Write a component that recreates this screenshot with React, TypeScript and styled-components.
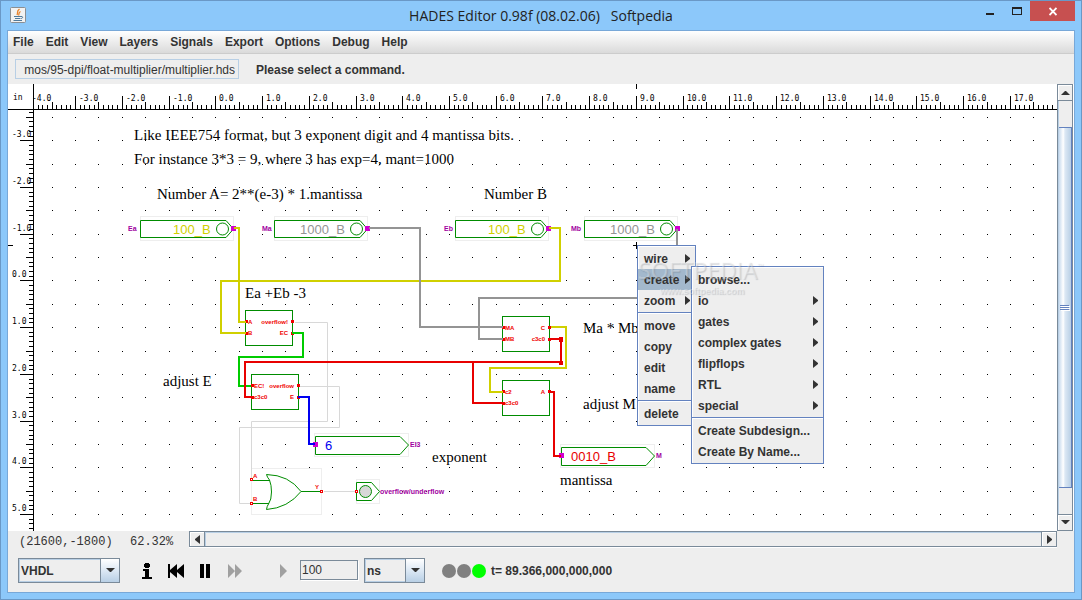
import React from "react";
import styled, { createGlobalStyle, css } from "styled-components";

const SANS = '"Liberation Sans", Arial, sans-serif';
const SERIF = '"Liberation Serif", "Times New Roman", serif';
const MONO = '"Liberation Mono", "Courier New", monospace';

const GlobalStyle = createGlobalStyle`
  * { box-sizing: border-box; }
  body { margin: 0; font: 12px/16px ${SANS}; color: #333; }
  button, input, select { font: inherit; color: inherit; margin: 0; border-radius: 0; }
`;

/* ---------- window frame ---------- */

const Frame = styled.div`
  display: flex;
  flex-direction: column;
  height: 100vh;
  min-height: 400px;
  padding: 0 6px 6px;
  border: 1px solid #6a98c6;
  background: #8cc8fa;
`;

const TitleBar = styled.header`
  display: grid;
  grid-template-columns: 104px 1fr 104px;
  align-items: start;
  height: 29px;
  flex: none;
`;

const AppIcon = styled.svg`
  width: 16px;
  height: 16px;
  margin: 6px 0 0 3px;
`;

const Title = styled.h1`
  margin: 0;
  padding-top: 5px;
  font: 14px/20px "Open Sans", sans-serif;
  color: #222;
  text-align: center;
  white-space: pre;
`;

const WindowButtons = styled.div`
  display: flex;
  justify-content: flex-end;
`;

const WindowButton = styled.button<{ $close?: boolean }>`
  width: ${(p) => (p.$close ? 45 : 27)}px;
  height: 20px;
  padding: 0;
  border: 0;
  background: ${(p) => (p.$close ? "#c75050" : "transparent")};
  svg { display: block; margin: 0 auto; }
`;

const Content = styled.div`
  display: flex;
  flex-direction: column;
  flex: 1;
  min-height: 0;
  border: 1px solid #78a8d8;
  background: #eee;
`;

/* ---------- menu bar and command line ---------- */

const MenuBar = styled.nav`
  display: flex;
  gap: 12px;
  height: 23px;
  flex: none;
  padding: 3px 5px 0;
  border-bottom: 1px solid #ccc;
  background: linear-gradient(#fff, #dadada);
`;

const MenuButton = styled.button`
  padding: 0;
  border: 0;
  background: none;
  font-weight: bold;
  line-height: 16px;
  height: 16px;
`;

const CommandBar = styled.div`
  display: flex;
  align-items: center;
  gap: 17px;
  height: 30px;
  flex: none;
  padding: 0 7px;
`;

const PathField = styled.input`
  width: 224px;
  height: 20px;
  padding: 2px 3px 0;
  border: 1px solid #b8cfe5;
  outline: 0;
  background: #eee;
  text-align: right;
`;

const Prompt = styled.strong`
  padding-top: 2px;
`;

/* ---------- work area ---------- */

const WorkArea = styled.main`
  position: relative;
  display: flex;
  flex: 1;
  min-height: 0;
  background: #fff;
`;

const Sheet = styled.svg`
  display: block;
  flex: 1;
  min-width: 0;
  height: 100%;
`;

const Note = styled.text`
  font: 15px ${SERIF};
  fill: #000;
`;

const RulerText = styled.text`
  font: 8px "DejaVu Sans Mono", monospace;
  fill: #000;
`;

const ValueText = styled.text`
  font: 13px ${SANS};
`;

const NameText = styled.text`
  font: bold 7px ${SANS};
  fill: #a000a0;
`;

const PinText = styled.text`
  font: bold 6px ${SANS};
  fill: #f00000;
`;

/* ---------- scroll bars ---------- */

const VScroll = styled.div`
  display: flex;
  flex-direction: column;
  width: 17px;
  flex: none;
  border-left: 1px solid #7a8a99;
  border-right: 1px solid #fff;
`;

const VTrack = styled.div`
  display: flex;
  flex-direction: column;
  flex: 1;
  padding: 26px 0;
  background: #eee;
  border-left: 1px solid #b8cfe5;
  border-right: 1px solid #7a8a99;
`;

const VThumb = styled.div`
  flex: 1;
  display: grid;
  place-items: center;
  border: 1px solid #6382bf;
  border-left: 0;
  background: linear-gradient(90deg, #c8dbee, #fff 35%, #dce8f4 50%, #b8cfe5);
`;

const ScrollButton = styled.button<{ $side?: boolean }>`
  display: grid;
  place-items: center;
  flex: none;
  width: 16px;
  height: ${(p) => (p.$side ? 16 : 17)}px;
  padding: 0;
  border: 1px solid #7a8a99;
  background: #eee;
  box-shadow: inset 1px 1px #fff;
  ${(p) =>
    !p.$side &&
    css`
      width: 15px;
      border-left: 0;
    `}
`;

const StatusRow = styled.div`
  display: flex;
  height: 18px;
  flex: none;
  padding-right: 17px;
`;

const Readout = styled.output`
  font: 12px/22px ${MONO};
  width: 111px;
  padding-left: 11px;
`;

const Zoom = styled(Readout)`
  width: 70px;
`;

const HScroll = styled.div`
  display: flex;
  flex: 1;
  height: 17px;
  border-bottom: 1px solid #fff;
`;

const HTrack = styled.div`
  flex: 1;
  border: 1px solid #7a8a99;
  border-width: 1px 0;
  box-shadow: inset 1px 1px #b8cfe5;
`;

/* ---------- simulation controls ---------- */

const SimBar = styled.footer`
  display: flex;
  align-items: center;
  height: 43px;
  flex: none;
  padding: 0 10px;
`;

const Combo = styled.label<{ $w: number }>`
  position: relative;
  width: ${(p) => p.$w}px;
  height: 25px;
  flex: none;
`;

const Select = styled.select`
  appearance: none;
  width: 100%;
  height: 25px;
  padding: 0 20px 0 2px;
  border: 1px solid #7a8a99;
  outline: 0;
  background: #eee;
  box-shadow: inset 1px 1px #b8cfe5, inset -1px -1px #b8cfe5;
  font-weight: bold;
`;

const ComboArrow = styled.span`
  position: absolute;
  top: 0;
  right: 0;
  display: grid;
  place-items: center;
  width: 20px;
  height: 25px;
  border: 1px solid #7a8a99;
  background: linear-gradient(#fff, #dce8f4 50%, #b8cfe5);
  pointer-events: none;
`;

const Transport = styled.div`
  display: flex;
  align-items: center;
  gap: 14px;
  margin-left: 20px;
`;

const IconButton = styled.button`
  padding: 0;
  border: 0;
  background: none;
  height: 16px;
  svg { display: block; }
`;

const StepGroup = styled.div`
  display: flex;
  align-items: center;
  gap: 6px;
  margin-left: 37px;
`;

const StepField = styled.input`
  width: 58px;
  height: 20px;
  margin: 0 0 2px 6px;
  padding: 0 1px;
  border: 1px solid #7a8a99;
  outline: 0;
  background: #eee;
  box-shadow: 1px 1px #fff;
`;

const Lamps = styled.div`
  display: flex;
  gap: 1px;
  margin: 0 5px 0 17px;
`;

const Lamp = styled.span<{ $on?: boolean }>`
  width: 14px;
  height: 14px;
  border-radius: 50%;
  background: ${(p) => (p.$on ? "#0f0" : "#808080")};
`;

/* ---------- popup menus ---------- */

const Popup = styled.ul<{ $x: number; $y: number; $w: number }>`
  position: absolute;
  left: ${(p) => p.$x}px;
  top: ${(p) => p.$y}px;
  width: ${(p) => p.$w}px;
  margin: 0;
  padding: 2px 0 1px;
  list-style: none;
  border: 1px solid #6382bf;
  background: #eee;
  box-shadow: inset 1px 1px #fff;
`;

const Divider = styled.li`
  height: 2px;
  margin: 1px 0;
  border-top: 1px solid #6382bf;
  background: #fff;
`;

const Item = styled.button<{ $active?: boolean }>`
  display: flex;
  align-items: center;
  justify-content: space-between;
  width: 100%;
  height: 21px;
  padding: 0 5px 0 6px;
  border: 0;
  font-weight: bold;
  text-align: left;
  white-space: nowrap;
  background: ${(p) => (p.$active ? "#a3b8cc" : "transparent")};
`;

const Watermark = styled.div`
  position: absolute;
  left: 630px;
  top: 174px;
  width: 134px;
  font: 23px/24px "Open Sans", sans-serif;
  color: rgba(255, 255, 255, 0.3);
  text-shadow: 1px 1px 1px rgba(90, 100, 110, 0.25);
  pointer-events: none;
  white-space: nowrap;
  sup { font-size: 8px; line-height: 8px; vertical-align: 10px; }
  small { display: block; padding-left: 22px; font: bold 9px/18px ${SANS}; }
`;

/* ---------- data ---------- */

const MENUS = ["File", "Edit", "View", "Layers", "Signals", "Export", "Options", "Debug", "Help"];

type Entry = { label: string; sub?: boolean; active?: boolean } | null;

const CONTEXT: Entry[] = [
  { label: "wire", sub: true },
  { label: "create", sub: true, active: true },
  { label: "zoom", sub: true },
  null,
  { label: "move" },
  { label: "copy" },
  { label: "edit" },
  { label: "name" },
  null,
  { label: "delete" },
];

const CREATE: Entry[] = [
  { label: "browse..." },
  { label: "io", sub: true },
  { label: "gates", sub: true },
  { label: "complex gates", sub: true },
  { label: "flipflops", sub: true },
  { label: "RTL", sub: true },
  { label: "special", sub: true },
  null,
  { label: "Create Subdesign..." },
  { label: "Create By Name..." },
];

const NOTES: [number, number, string][] = [
  [134, 140, "Like IEEE754 format, but 3 exponent digit and 4 mantissa bits."],
  [134, 164, "For instance 3*3 = 9, where 3 has exp=4, mant=1000"],
  [157, 199, "Number A= 2**(e-3) * 1.mantissa"],
  [484, 199, "Number B"],
  [245, 298, "Ea +Eb -3"],
  [163, 386, "adjust E"],
  [583, 333, "Ma * Mb"],
  [583, 409, "adjust M"],
  [432, 462, "exponent"],
  [560, 485, "mantissa"],
];

const YELLOW = "#d0d000";
const GREY = "#949494";
const RED = "#e80000";
const GREEN = "#008c00";

const WIRES: [string, string][] = [
  [YELLOW, "M234 228H239V322H246"],
  [YELLOW, "M549 228H560V281H221V333H246"],
  [GREY, "M369 228H420V327H503"],
  [GREY, "M677 229V298H479V339H503"],
  ["#00cc00", "M292 333H303V357H239V386H251"],
  [YELLOW, "M551 327H566V368H490V392H503"],
  [RED, "M550 339H561V362M561 362H245V397H252M473 362V403H503"],
  [RED, "M550 392H554V456H561"],
  ["#0000f0", "M298 397H309V444H315"],
];

/* ---------- drawing parts ---------- */

const STEP = 46.74;
const X0 = 215.8;
const Y0 = 280.9;

function Rulers() {
  let ticks = "";
  const labels: React.ReactNode[] = [];
  for (let k = -39; k <= 500; k++) {
    const x = Math.floor(X0 + (k * STEP) / 10);
    const top = k % 10 === 0 ? 96 : k % 5 === 0 ? 102 : 105;
    ticks += `M${x + 0.5} ${top}V109`;
  }
  for (let k = -36; k <= 300; k++) {
    const y = Math.floor(Y0 + (k * STEP) / 10);
    const left = k % 10 === 0 ? 20 : k % 5 === 0 ? 26 : 29;
    ticks += `M${left} ${y + 0.5}H33`;
  }
  for (let n = -4; n <= 17; n++) {
    labels.push(
      <RulerText key={"h" + n} x={Math.floor(X0 + n * STEP) + 4} y={101}>{n.toFixed(1)}</RulerText>
    );
  }
  for (let n = -3; n <= 5; n++) {
    labels.push(
      <RulerText key={"v" + n} x={12} y={Math.floor(Y0 + n * STEP) - 3}>{n.toFixed(1)}</RulerText>
    );
  }
  return (
    <g>
      <path d={ticks + "M33.5 84V3000M8 109.5H4000M8 245.5H13M636.5 84V89"} stroke="#000" fill="none" />
      <RulerText x={13} y={100}>in</RulerText>
      {labels}
    </g>
  );
}

function Grid() {
  let d = "";
  for (let i = -7; i <= 80; i++)
    for (let j = -7; j <= 50; j++)
      d += `M${Math.floor(X0 + (i * STEP) / 2)} ${Math.floor(Y0 + (j * STEP) / 2) + 0.5}h1`;
  return <path d={d} stroke="#000" />;
}

interface InputPortProps {
  x: number;
  name: string;
  value: string;
  color: string;
  nameX: number;
  valueX: number;
}

function InputPort({ x, name, value, color, nameX, valueX }: InputPortProps) {
  return (
    <g fill="none">
      <rect x={x + 0.5} y={216.5} width={93} height={24} stroke="#eee" fill="#fff" />
      <path d={`M${x + 86} 220.5H${x + 0.5}V237.5H${x + 86}L${x + 93.5} 229L${x + 86} 220.5`} stroke={GREEN} />
      <circle cx={x + 82.5} cy={229} r={6} stroke={GREEN} />
      <rect x={x + 91} y={226} width={5} height={5} fill="#d000d0" />
      <ValueText x={valueX} y={234} fill={color}>{value}</ValueText>
      <NameText x={nameX} y={231}>{name}</NameText>
    </g>
  );
}

function OutputPort({ x, y, name, value, color }: { x: number; y: number; name: string; value: string; color: string }) {
  return (
    <g fill="none">
      <rect x={x - 0.5} y={y - 2.5} width={94} height={23} stroke="#eee" fill="#fff" />
      <path d={`M${x + 85} ${y + 0.5}H${x + 0.5}V${y + 18.5}H${x + 85}L${x + 93.5} ${y + 9}L${x + 85} ${y + 0.5}`} stroke={GREEN} />
      <rect x={x - 2} y={y + 6} width={5} height={5} fill="#d000d0" />
      <ValueText x={x + 10} y={y + 14} fill={color}>{value}</ValueText>
      <NameText x={x + 95} y={y + 11}>{name}</NameText>
    </g>
  );
}

function Block({ x, y, left, right }: { x: number; y: number; left: string[]; right: string[] }) {
  return (
    <g>
      <rect x={x + 0.5} y={y + 0.5} width={47} height={35} stroke={GREEN} fill="#fff" />
      {left.map((t, i) => (
        <g key={"l" + i}>
          <rect x={x} y={y + 10 + i * 12} width={3} height={3} fill="#f00000" />
          <PinText x={x + 3} y={y + 14 + i * 11}>{t}</PinText>
        </g>
      ))}
      {right.map((t, i) => (
        <g key={"r" + i}>
          <rect x={x + 46} y={y + 10 + i * 12} width={3} height={3} fill="#f00000" />
          <PinText x={x + 43} y={y + 14 + i * 11} textAnchor="end">{t}</PinText>
        </g>
      ))}
    </g>
  );
}

function Pin({ x, y }: { x: number; y: number }) {
  return <rect x={x - 0.5} y={y - 0.5} width={2} height={2} fill="#fff" stroke="#f00000" />;
}

/* Sheet coordinates are counted from the corner of the window. */
function Schematic() {
  return (
    <Sheet role="img" aria-label="Float multiplier schematic">
      <g transform="translate(-8 -84)">
        <Grid />
        <InputPort x={140} name="Ea" value="100_B" color={YELLOW} nameX={128} valueX={173} />
        <InputPort x={274} name="Ma" value="1000_B" color={GREY} nameX={262} valueX={300} />
        <InputPort x={455} name="Eb" value="100_B" color={YELLOW} nameX={444} valueX={488} />
        <InputPort x={584} name="Mb" value="1000_B" color={GREY} nameX={571} valueX={610} />
        <OutputPort x={315} y={436} name="EI3" value="6" color="#0000f0" />
        <OutputPort x={561} y={447} name="M" value="0010_B" color={RED} />
        <Block x={245} y={310} left={["A", "B"]} right={["overflow!", "EC"]} />
        <Block x={251} y={374} left={["EC!", "c3c0"]} right={["overflow", "E"]} />
        <Block x={502} y={316} left={["MA", "MB"]} right={["C", "c3c0"]} />
        <Block x={502} y={380} left={["c2", "c3c0"]} right={["A"]} />
        <g fill="none" stroke={GREEN}>
          <rect x={251.5} y={468.5} width={70} height={46} stroke="#eee" fill="#fff" />
          <path d="M253 480.5H270M253 503.5H269M301 491.5H321" />
          <path d="M266.5 474.5Q267 477 269.5 480Q271.5 485 271.5 492Q271.5 500 268.5 504Q267 506 266.5 509.5Q288 508 301 491.5Q289 475 266.5 474.5" />
          <rect x={356.5} y={479.5} width={23} height={24} stroke="#eee" fill="#fff" />
          <path d="M371.5 482.5H356.5V500.5H371.5L379.5 491.5Z" />
          <circle cx={365.5} cy={491.5} r={6} fill="#d8d8d8" />
        </g>
        <path
          d="M295 322.5H327.5V421.5H251.5V478M300 386.5H339.5V427.5H239.5V503.5H251M324 491.5H356"
          stroke="#d8d8d8"
          fill="none"
        />
        <Pin x={251} y={479} />
        <Pin x={251} y={503} />
        <Pin x={321} y={491} />
        <Pin x={356} y={491} />
        <PinText x={253} y={478}>A</PinText>
        <PinText x={253} y={501}>B</PinText>
        <PinText x={315} y={489}>Y</PinText>
        <NameText x={380} y={494}>overflow/underflow</NameText>
        {WIRES.map(([color, d], i) => (
          <path key={i} d={d} stroke={color} strokeWidth={2} fill="none" />
        ))}
        <path d="M559 337h4v5h-4zM559 361h4v4h-4z" fill={RED} />
        {NOTES.map(([x, y, t]) => (
          <Note key={t} x={x} y={y}>{t}</Note>
        ))}
        <path d="M633 245.5H639M636.5 242V249" stroke="#000" />
        <rect x={8} y={84} width={25} height={3000} fill="#fff" />
        <Rulers />
      </g>
    </Sheet>
  );
}

const ARROWS = {
  up: "M0 5L4 1H5L9 5Z",
  down: "M0 0H9L5 4H4Z",
  left: "M5 0V9L0 5V4Z",
  right: "M0 0V9L5 5V4Z",
};

function Arrow({ dir }: { dir: keyof typeof ARROWS }) {
  const flat = dir === "up" || dir === "down";
  return (
    <svg width={flat ? 9 : 5} height={flat ? 5 : 9} fill="#333" aria-hidden="true">
      <path d={ARROWS[dir]} />
    </svg>
  );
}

function MenuList({ items, x, y, w }: { items: Entry[]; x: number; y: number; w: number }) {
  return (
    <Popup $x={x} $y={y} $w={w}>
      {items.map((it, i) =>
        it ? (
          <li key={i}>
            <Item $active={it.active}>
              {it.label}
              {it.sub && <Arrow dir="right" />}
            </Item>
          </li>
        ) : (
          <Divider key={i} />
        )
      )}
    </Popup>
  );
}

export default function App() {
  return (
    <>
      <GlobalStyle />
      <Frame>
        <TitleBar>
          <AppIcon viewBox="0 0 16 16" aria-hidden="true">
            <rect x=".5" y=".5" width="15" height="15" rx="1" fill="#f2f2f2" stroke="#8a8f94" />
            <path d="M9.5 2C6 4.5 8.5 5.5 7 8M10.500 4.5C8 6 9.5 7 8.5 8.5" stroke="#e8842c" strokeWidth="1.3" fill="none" />
            <path d="M4 9.5H11M5 11.5H10.5M3.5 13.5H12M11 9.5C13.5 9 13 11.5 11 11.5" stroke="#4f7a9c" fill="none" />
          </AppIcon>
          <Title>{"HADES Editor 0.98f (08.02.06)   Softpedia"}</Title>
          <WindowButtons>
            <WindowButton aria-label="Minimize">
              <svg width="8" height="20"><path d="M0 12h8v2H0z" fill="#222" /></svg>
            </WindowButton>
            <WindowButton aria-label="Maximize">
              <svg width="10" height="20"><path d="M0 6h10v8H0zM1 8v5h8V8z" fillRule="evenodd" fill="#222" /></svg>
            </WindowButton>
            <WindowButton $close aria-label="Close">
              <svg width="8" height="20"><path d="M0.5 7L7.5 14M7.5 7L0.5 14" stroke="#fff" strokeWidth="1.8" /></svg>
            </WindowButton>
          </WindowButtons>
        </TitleBar>
        <Content>
          <MenuBar>
            {MENUS.map((m) => (
              <MenuButton key={m}>{m}</MenuButton>
            ))}
          </MenuBar>
          <CommandBar>
            <PathField aria-label="Design file" readOnly value="mos/95-dpi/float-multiplier/multiplier.hds" />
            <Prompt>Please select a command.</Prompt>
          </CommandBar>
          <WorkArea>
            <Schematic />
            <VScroll>
              <ScrollButton aria-label="Scroll up"><Arrow dir="up" /></ScrollButton>
              <VTrack>
                <VThumb>
                  <svg width="10" height="6" aria-hidden="true">
                    <path d="M0 .5h9M0 2.5h9M0 4.5h9" stroke="#6382bf" />
                    <path d="M1 1.5h9M1 3.5h9M1 5.5h9" stroke="#fff" />
                  </svg>
                </VThumb>
              </VTrack>
              <ScrollButton aria-label="Scroll down"><Arrow dir="down" /></ScrollButton>
            </VScroll>
            <MenuList items={CONTEXT} x={629} y={161} w={59} />
            <MenuList items={CREATE} x={683} y={182} w={133} />
            <Watermark aria-hidden="true">
              SOFTPEDIA<sup>™</sup>
              <small>www.softpedia.com</small>
            </Watermark>
          </WorkArea>
          <StatusRow>
            <Readout>(21600,-1800)</Readout>
            <Zoom>62.32%</Zoom>
            <HScroll>
              <ScrollButton $side aria-label="Scroll left"><Arrow dir="left" /></ScrollButton>
              <HTrack />
              <ScrollButton $side aria-label="Scroll right"><Arrow dir="right" /></ScrollButton>
            </HScroll>
          </StatusRow>
          <SimBar>
            <Combo $w={102}>
              <Select aria-label="Simulation model" defaultValue="VHDL"><option>VHDL</option></Select>
              <ComboArrow><Arrow dir="down" /></ComboArrow>
            </Combo>
            <Transport>
              <IconButton aria-label="Info">
                <svg width="14" height="16"><path d="M5 0h4v1h1v3H9v1H5V4H4V1h1zM3 6h6v8h3v2H2v-2h3V8H3z" /></svg>
              </IconButton>
              <IconButton aria-label="Rewind">
                <svg width="17" height="16"><path d="M0 1h2v6L9 1v6l7-6v14L9 9v6L2 9v6H0z" /></svg>
              </IconButton>
              <IconButton aria-label="Pause">
                <svg width="14" height="16"><path d="M1 1h4v14H1zM7 1h4v14H7z" /></svg>
              </IconButton>
              <IconButton aria-label="Run">
                <svg width="16" height="16"><path d="M1 1l7 7-7 7zM8 1l7 7-7 7z" fill="#a0a0a0" /></svg>
              </IconButton>
            </Transport>
            <StepGroup>
              <IconButton aria-label="Step">
                <svg width="8" height="16"><path d="M0 1l7 7-7 7z" fill="#a0a0a0" /></svg>
              </IconButton>
              <StepField aria-label="Step time" defaultValue="100" />
              <Combo $w={61}>
                <Select aria-label="Time unit" defaultValue="ns"><option>ns</option></Select>
                <ComboArrow><Arrow dir="down" /></ComboArrow>
              </Combo>
            </StepGroup>
            <Lamps>
              <Lamp /><Lamp /><Lamp $on />
            </Lamps>
            <strong>t= 89.366,000,000,000</strong>
          </SimBar>
        </Content>
      </Frame>
    </>
  );
}
